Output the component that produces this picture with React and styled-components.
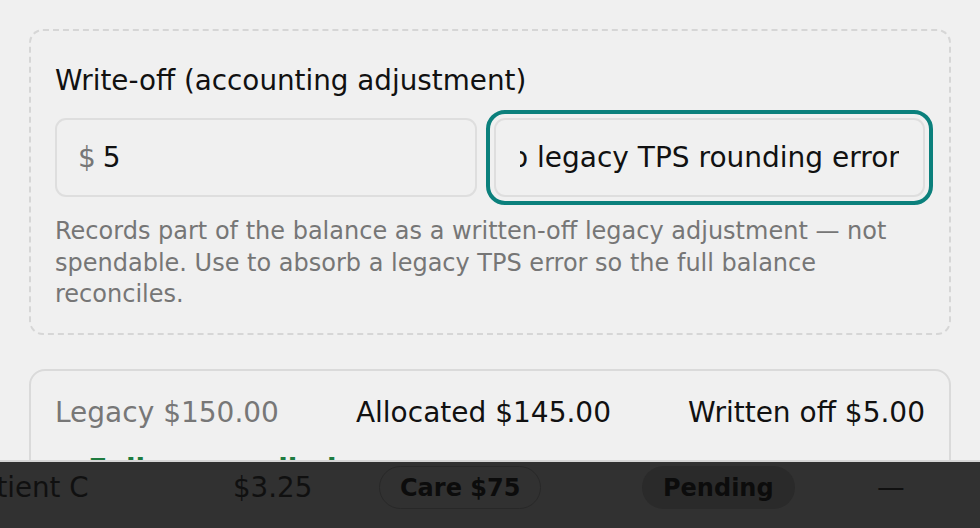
import React, { useLayoutEffect, useRef } from 'react';
import styled, { createGlobalStyle, css } from 'styled-components';

const Global = createGlobalStyle`
  html, body { margin: 0; background: #f0f0f0; }
  body { font-family: "DejaVu Sans", "Noto Sans", sans-serif; color: #111; }
  * { box-sizing: border-box; }
`;

const Page = styled.main`
  display: flex;
  flex-direction: column;
  gap: 34px;
  padding: 29px 29px 140px;
`;

const WriteOffBox = styled.section`
  border: 2px dashed #d6d6d6;
  border-radius: 14px;
  padding: 29px 24px 22px;
`;

const Title = styled.h3`
  margin: 0 0 16px;
  font-size: 27.8px;
  font-weight: 400;
  line-height: 42px;
  color: #111;
`;

const FieldRow = styled.div`
  display: grid;
  grid-template-columns: 422fr 432fr;
  gap: 17px;
`;

const Field = styled.label`
  display: flex;
  align-items: center;
  gap: 7px;
  height: 79px;
  padding: 0 ${p => (p.$focused ? 24 : 21)}px;
  border: 2px solid #dedede;
  border-radius: 11px;
  background: #f0f0f0;
  ${p =>
    p.$focused &&
    css`
      outline: 4px solid #0b807c;
      outline-offset: 4px;
    `}
`;

const Prefix = styled.span`
  font-size: 28px;
  color: #777;
`;

const TextInput = styled.input`
  flex: 1;
  min-width: 0;
  border: 0;
  padding: 0;
  margin: 0;
  background: transparent;
  font-family: inherit;
  font-size: 28px;
  color: #111;
  outline: none;
`;

const Helper = styled.p`
  margin: 19px 0 0;
  font-size: 24px;
  line-height: 31.5px;
  color: #767676;
`;

const SummaryCard = styled.section`
  border: 2px solid #dadada;
  border-radius: 16px;
  padding: 26px 24px 24px;
`;

const SummaryRow = styled.div`
  display: flex;
  justify-content: space-between;
  font-size: 28px;
  line-height: 32px;
`;

const Figure = styled.span`
  color: ${p => (p.$muted ? '#777' : '#111')};
`;

const Status = styled.div`
  margin-top: 25px;
  font-size: 28px;
  font-weight: 700;
  line-height: 32px;
  color: #1e7b3f;
`;

const TableBar = styled.div`
  position: fixed;
  left: 0;
  right: 0;
  bottom: 0;
  height: 68px;
  padding-top: 4px;
  border-top: 2px solid #d6d6d6;
  background: #313131;
  overflow: hidden;
`;

const TableRow = styled.div`
  display: grid;
  grid-template-columns: 269px 146px 263px 235px auto;
  align-items: center;
  height: 43px;
  margin-left: -36px;
  font-size: 27.7px;
  color: #101010;
  white-space: nowrap;
`;

const Cell = styled.span`
  display: flex;
  align-items: center;
`;

const Pill = styled.span`
  display: inline-flex;
  align-items: center;
  height: 43px;
  padding: 0 20px;
  border-radius: 999px;
  border: 1.5px solid ${p => (p.$filled ? 'transparent' : '#282828')};
  background: ${p => (p.$filled ? '#2a2a2a' : 'transparent')};
  font-size: 24px;
  font-weight: 700;
  color: #0c0c0c;
`;

function ScrolledInput({ value }) {
  const ref = useRef(null);
  useLayoutEffect(() => {
    const el = ref.current;
    if (!el) return;
    const toEnd = () => {
      el.scrollLeft = el.scrollWidth;
    };
    toEnd();
    const id = requestAnimationFrame(toEnd);
    const t = setTimeout(toEnd, 50);
    return () => {
      cancelAnimationFrame(id);
      clearTimeout(t);
    };
  }, []);
  return <TextInput ref={ref} defaultValue={value} aria-label="Write-off reason" />;
}

export default function App() {
  return (
    <>
      <Global />
      <Page>
        <WriteOffBox>
          <Title>Write-off (accounting adjustment)</Title>
          <FieldRow>
            <Field>
              <Prefix>$</Prefix>
              <TextInput defaultValue="5" aria-label="Write-off amount" />
            </Field>
            <Field $focused>
              <ScrolledInput value="Written off due to legacy TPS rounding error" />
            </Field>
          </FieldRow>
          <Helper>
            Records part of the balance as a written-off legacy adjustment — not
            spendable. Use to absorb a legacy TPS error so the full balance
            reconciles.
          </Helper>
        </WriteOffBox>
        <SummaryCard>
          <SummaryRow>
            <Figure $muted>Legacy $150.00</Figure>
            <Figure>Allocated $145.00</Figure>
            <Figure>Written off $5.00</Figure>
          </SummaryRow>
          <Status>✓ Fully reconciled</Status>
        </SummaryCard>
      </Page>
      <TableBar>
        <TableRow>
          <Cell>Patient C</Cell>
          <Cell>$3.25</Cell>
          <Cell>
            <Pill>Care $75</Pill>
          </Cell>
          <Cell>
            <Pill $filled>Pending</Pill>
          </Cell>
          <Cell>—</Cell>
        </TableRow>
      </TableBar>
    </>
  );
}
